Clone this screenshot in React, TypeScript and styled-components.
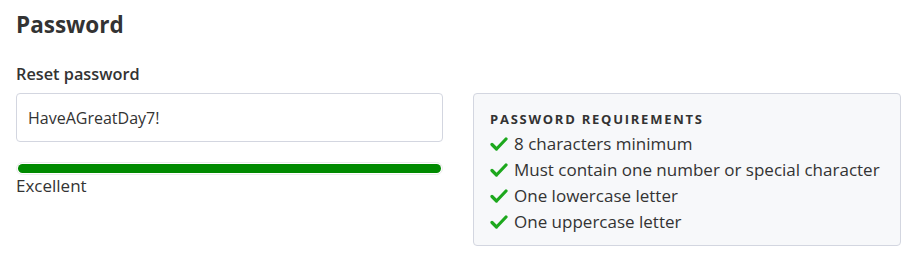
import styled, { createGlobalStyle } from "styled-components";

const Global = createGlobalStyle`
  body {
    margin: 0;
    background: #fff;
    font-family: "Open Sans", "Noto Sans", sans-serif;
    color: #333;
  }
`

const Page = styled.div`
  padding: 10px 16px 0 16px;
  width: 886px;
`

const Title = styled.h1`
  margin: 0 0 24px;
  font-size: 22.5px;
  font-weight: 700;
  line-height: 30px;
  color: #333;
`

const Columns = styled.div`
  display: grid;
  grid-template-columns: 427px 428px;
  column-gap: 30px;
  align-items: start;
`

const Label = styled.label`
  grid-column: 1 / -1;
  display: block;
  font-size: 16.3px;
  font-weight: 600;
  line-height: 20px;
  margin-bottom: 9px;
`

const Field = styled.div`
  display: flex;
  flex-direction: column;
`

const Input = styled.input`
  box-sizing: border-box;
  width: 100%;
  height: 49px;
  padding: 0 11px;
  border: 1px solid #d3d6e0;
  border-radius: 4px;
  font-family: inherit;
  font-size: 16px;
  color: #333;
  outline: none;
`

const Track = styled.div`
  margin-top: 20px;
  height: 13px;
  box-sizing: border-box;
  border: 1px solid #ececec;
  border-radius: 7px;
  padding: 1px;
`

const Fill = styled.div`
  height: 100%;
  border-radius: 5px;
  background: #008a00;
`

const Strength = styled.div`
  font-size: 17px;
  line-height: 22px;
`

const Requirements = styled.div`
  box-sizing: border-box;
  height: 153px;
  background: #f7f8fa;
  border: 1px solid #d3d6e0;
  border-radius: 4px;
  padding: 15px 16px;
`

const ReqTitle = styled.div`
  font-size: 13px;
  font-weight: 700;
  letter-spacing: 1.75px;
  text-transform: uppercase;
  line-height: 20px;
  margin-bottom: 2px;
`

const ReqList = styled.ul`
  list-style: none;
  margin: 0;
  padding: 0;
`

const ReqItem = styled.li`
  display: flex;
  align-items: center;
  gap: 6px;
  font-size: 17px;
  line-height: 26px;
`

const Check = () => (
  <svg width="18" height="14" viewBox="0 0 18 14" aria-hidden="true">
    <path d="M2 7.5 L6.5 12 L16 2" fill="none" stroke="#1da81d" strokeWidth="3.2" strokeLinecap="round" strokeLinejoin="round" />
  </svg>
)

const requirements = [
  "8 characters minimum",
  "Must contain one number or special character",
  "One lowercase letter",
  "One uppercase letter",
]

export default function App() {
  return (
    <>
      <Global />
      <Page>
        <Title>Password</Title>
        <Columns>
          <Label htmlFor="pw">Reset password</Label>
          <Field>
            <Input id="pw" type="text" defaultValue="HaveAGreatDay7!" />
            <Track>
              <Fill style={{ width: "100%" }} />
            </Track>
            <Strength>Excellent</Strength>
          </Field>
          <Requirements>
            <ReqTitle>Password requirements</ReqTitle>
            <ReqList>
              {requirements.map(r => (
                <ReqItem key={r}>
                  <Check />
                  {r}
                </ReqItem>
              ))}
            </ReqList>
          </Requirements>
        </Columns>
      </Page>
    </>
  )
}
